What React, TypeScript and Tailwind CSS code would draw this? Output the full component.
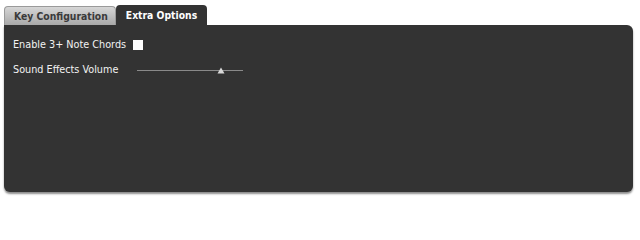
import React, { useState } from 'react';

const FONT = { fontFamily: '"DejaVu Sans Condensed", "DejaVu Sans", sans-serif' };

const TABS = ['Key Configuration', 'Extra Options'];

const VolumeSlider: React.FC<{ value: number }> = ({ value }) => (
  <div className="relative w-[106px] h-[10px]">
    <div className="absolute left-0 right-0 top-[5px] h-px bg-[#8a8a8a]" />
    <svg
      className="absolute top-[2px]"
      style={{ left: `${value * 106 - 4}px` }}
      width="8"
      height="7"
      viewBox="0 0 8 7"
    >
      <path d="M4 0.5 L7.5 6.5 L0.5 6.5 Z" fill="#d8d8d8" />
    </svg>
  </div>
);

export default function App() {
  const [tab, setTab] = useState(1);
  const [chords, setChords] = useState(false);

  return (
    <div className="w-[640px] h-[201px] bg-white pt-[5px] pl-[4px] pr-[7px]" style={FONT}>
      {/* Tab strip */}
      <div className="flex items-end h-[20px]">
        {TABS.map((t, i) => {
          const active = tab === i;
          return (
            <button
              key={t}
              onClick={() => setTab(i)}
              className={`text-[10.3px] font-bold leading-none rounded-t-[4px] ${
                active
                  ? 'h-[20px] px-[10px] bg-[#333333] text-white'
                  : 'h-[19px] pl-[9px] pr-[7px] bg-gradient-to-b from-[#d6d6d6] to-[#a9a9a9] text-[#3a3a3a] border border-b-0 border-[#9a9a9a]'
              }`}
            >
              {t}
            </button>
          );
        })}
      </div>

      {/* Panel */}
      <div className="h-[167px] bg-[#333333] rounded-b-[6px] rounded-tr-[6px] shadow-[0_2px_2px_rgba(0,0,0,0.45)] px-[9px] pt-[12px] text-[#f2f2f2] text-[10.75px]">
        <div className="flex items-center gap-[7px] h-[16px]">
          <span>Enable 3+ Note Chords</span>
          <button
            onClick={() => setChords(!chords)}
            className="w-[10px] h-[10px] bg-white"
            aria-pressed={chords}
          />
        </div>
        <div className="flex items-center gap-[19px] h-[16px] mt-[9px]">
          <span>Sound Effects Volume</span>
          <VolumeSlider value={0.79} />
        </div>
      </div>
    </div>
  );
}
